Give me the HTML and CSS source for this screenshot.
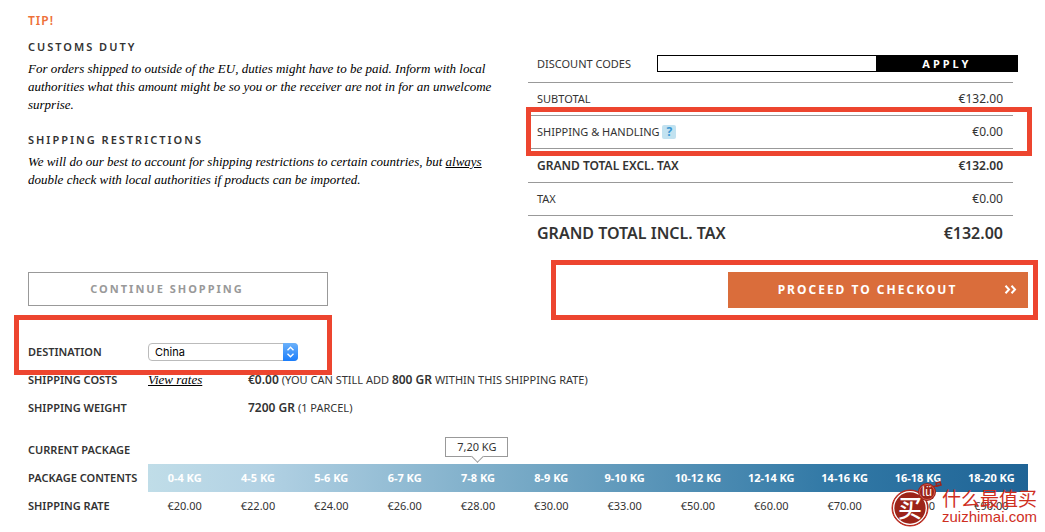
FILE: index.html
```html
<!DOCTYPE html>
<html lang="en">
<head>
  <meta charset="UTF-8">
  <title>Shopping Cart</title>
  <meta name="viewport" content="width=device-width, initial-scale=1.0">
  <link rel="stylesheet" href="styles.css">
</head>
<body>
  <main class="cart">
    <div class="cart-top">
      <section class="tips">
        <p class="tip-label">Tip!</p>
        <h2>Customs duty</h2>
        <p class="tip-text">For orders shipped to outside of the EU, duties might have to be paid. Inform with local<br>
          authorities what this amount might be so you or the receiver are not in for an unwelcome<br>
          surprise.</p>
        <h2>Shipping restrictions</h2>
        <p class="tip-text">We will do our best to account for shipping restrictions to certain countries, but <u>always</u><br>
          double check with local authorities if products can be imported.</p>
      </section>

      <section class="summary">
        <form class="discount">
          <label for="coupon">Discount codes</label>
          <input type="text" id="coupon" name="coupon">
          <button type="button">Apply</button>
        </form>
        <div class="totals-wrap">
          <table class="totals">
            <tr>
              <th scope="row">Subtotal</th>
              <td>€132.00</td>
            </tr>
            <tr>
              <th scope="row">Shipping &amp; handling <a href="#" class="help">?</a></th>
              <td>€0.00</td>
            </tr>
            <tr class="strong">
              <th scope="row">Grand total excl. tax</th>
              <td>€132.00</td>
            </tr>
            <tr>
              <th scope="row">Tax</th>
              <td>€0.00</td>
            </tr>
            <tr class="grand">
              <th scope="row">Grand total incl. tax</th>
              <td>€132.00</td>
            </tr>
          </table>
          <div class="mark mark-shipping"></div>
        </div>
      </section>
    </div>

    <div class="actions">
      <a href="#" class="btn btn-outline">Continue shopping</a>
      <div class="checkout">
        <button type="button" class="btn btn-primary">
          <span>Proceed to checkout</span>
          <svg width="13" height="9" viewBox="0 0 13 9" aria-hidden="true">
            <path d="M1.5 0.8 5 4.5 1.5 8.2M7.5 0.8 11 4.5 7.5 8.2" fill="none" stroke="#fff" stroke-width="2"/>
          </svg>
        </button>
        <div class="mark mark-checkout"></div>
      </div>
    </div>

    <section class="shipping">
      <div class="row">
        <label for="country">Destination</label>
        <div class="select">
          <select id="country" name="country">
            <option>China</option>
          </select>
          <svg width="15" height="18" viewBox="0 0 15 18" aria-hidden="true">
            <path d="M4.5 7.2 7.5 4.2 10.5 7.2M4.5 10.8 7.5 13.8 10.5 10.8" fill="none" stroke="#fff" stroke-width="1.4"/>
          </svg>
        </div>
        <div class="mark mark-destination"></div>
      </div>
      <div class="row">
        <span class="name">Shipping costs</span>
        <a href="#" class="rates">View rates</a>
        <span><b>€0.00</b> (you can still add <b>800 gr</b> within this shipping rate)</span>
      </div>
      <div class="row">
        <span class="name">Shipping weight</span>
        <span></span>
        <span><b>7200 gr</b> (1 parcel)</span>
      </div>
    </section>

    <table class="packages">
      <tr>
        <th scope="row">Current package</th>
        <td></td><td></td><td></td><td></td>
        <td><span class="bubble">7,20 kg</span></td>
        <td></td><td></td><td></td><td></td><td></td><td></td><td></td>
      </tr>
      <tr class="scale">
        <th scope="row">Package contents</th>
        <td>0-4 kg</td>
        <td>4-5 kg</td>
        <td>5-6 kg</td>
        <td>6-7 kg</td>
        <td>7-8 kg</td>
        <td>8-9 kg</td>
        <td>9-10 kg</td>
        <td>10-12 kg</td>
        <td>12-14 kg</td>
        <td>14-16 kg</td>
        <td>16-18 kg</td>
        <td>18-20 kg</td>
      </tr>
      <tr>
        <th scope="row">Shipping rate</th>
        <td>€20.00</td>
        <td>€22.00</td>
        <td>€24.00</td>
        <td>€26.00</td>
        <td>€28.00</td>
        <td>€30.00</td>
        <td>€33.00</td>
        <td>€50.00</td>
        <td>€60.00</td>
        <td>€70.00</td>
        <td>€80.00</td>
        <td>€90.00</td>
      </tr>
    </table>

    <div class="watermark" lang="zh">
      <svg width="52" height="48" viewBox="0 0 52 48">
        <path d="M43 8 C45 4 47 8 49 5 M46 3 50 2 51 5 47 6Z" fill="none" stroke="#9c2419" stroke-width="1.5"/>
        <circle cx="20" cy="28" r="18" fill="#9c2419" stroke="#c8271c" stroke-width="1"/>
        <circle cx="20" cy="28" r="16.3" fill="none" stroke="#fff" stroke-width="1.3"/>
        <circle cx="37" cy="12" r="9" fill="#9c2419"/>
        <circle cx="37" cy="12" r="7.5" fill="none" stroke="#d0564a" stroke-width="1"/>
        <text x="20" y="37" class="seal">买</text>
        <text x="37" y="16" class="seal-small">lü</text>
      </svg>
      <div class="watermark-text">
        <span class="watermark-name">什么最值买</span>
        <span class="watermark-url">zuizhimai.com</span>
      </div>
    </div>
  </main>
</body>
</html>
```
FILE: styles.css
```css
* {
  box-sizing: border-box;
}
body {
  margin: 0;
  background: #fff;
  color: #333;
  font-family: "Trebuchet MS", "Noto Sans", sans-serif;
  font-size: 11px;
  line-height: 18px;
}
.cart {
  position: relative;
  padding: 12px 17px 12px 28px;
}
.cart-top {
  display: grid;
  grid-template-columns: minmax(0, 48fr) minmax(0, 50fr);
  gap: 20px;
}

/* tips */
.tip-label {
  margin: 0 0 8px;
  color: #ee7038;
  font-size: 12px;
  font-weight: 600;
  letter-spacing: 1px;
  text-transform: uppercase;
}
.tips h2 {
  margin: 0 0 4px;
  font-size: 11px;
  font-weight: 600;
  line-height: 18px;
  letter-spacing: 2px;
  text-transform: uppercase;
}
.tip-text {
  margin: 0 0 17px;
  color: #000;
  font-family: Georgia, "Liberation Serif", serif;
  font-size: 13px;
  font-style: italic;
  line-height: 18px;
  white-space: nowrap;
}

/* summary */
.summary {
  padding-top: 43px;
}
.discount {
  display: flex;
  align-items: center;
  height: 17px;
  margin: 0 10px 10px 9px;
  text-transform: uppercase;
}
.discount label {
  width: 120px;
}
.discount input {
  flex: 3;
  min-width: 0;
  height: 17px;
  border: 1px solid #000;
  border-right: 0;
}
.discount button {
  flex: 2;
  height: 17px;
  padding: 0;
  border: 0;
  background: #000;
  color: #fff;
  font: bold 11px/17px "Noto Sans", sans-serif;
  letter-spacing: 3px;
  text-transform: uppercase;
}
.totals-wrap {
  position: relative;
  margin-right: 15px;
}
.totals {
  width: 100%;
  border-collapse: collapse;
  text-transform: uppercase;
}
.totals th,
.totals td {
  height: 33px;
  padding: 0 10px 0 9px;
  border-top: 1px solid #999;
  font-weight: normal;
  text-align: left;
}
.totals td {
  font-size: 12px;
  text-align: right;
}
.totals .strong th,
.totals .strong td {
  height: 34px;
  font-size: 12px;
  font-weight: 600;
}
.totals .grand th,
.totals .grand td {
  height: 35px;
  font-size: 16px;
  font-weight: 600;
}
.help {
  display: inline-block;
  width: 14px;
  height: 14px;
  border-radius: 2px;
  background: #c2e2f0;
  color: #3b97d3;
  font: bold 12px/14px "Noto Sans", sans-serif;
  text-align: center;
  text-decoration: none;
}

/* red frames */
.mark {
  position: absolute;
  border: 5px solid #ed452f;
  pointer-events: none;
}
.mark-shipping {
  top: 25px;
  left: -2px;
  right: -19px;
  height: 49px;
}
.mark-checkout {
  top: -12px;
  bottom: -12px;
  left: -177px;
  right: -10px;
}
.mark-destination {
  top: -23px;
  left: -14px;
  width: 318px;
  height: 60px;
}

/* buttons */
.actions {
  display: flex;
  align-items: flex-start;
  justify-content: space-between;
  margin-top: 21px;
}
.checkout {
  position: relative;
}
.btn {
  display: flex;
  align-items: center;
  justify-content: center;
  width: 300px;
  height: 34px;
  font: bold 11px/18px "Trebuchet MS", "Noto Sans", sans-serif;
  letter-spacing: 2px;
  text-decoration: none;
  text-transform: uppercase;
}
.btn-outline {
  padding-right: 22px;
  border: 1px solid #999;
  color: #999;
}
.btn-primary {
  height: 36px;
  padding: 0 11px 0 3px;
  border: 0;
  background: #da6d3b;
  color: #fff;
  font-size: 12px;
}
.btn-primary span {
  flex: 1;
}

/* shipping details */
.shipping {
  margin-top: 30px;
  text-transform: uppercase;
}
.row {
  position: relative;
  display: grid;
  grid-template-columns: 120px 100px 1fr;
  align-items: center;
  height: 28px;
}
.row label,
.row .name,
.packages th {
  font-size: 11px;
  font-weight: 600;
}
.row b {
  font-size: 12px;
  font-weight: 600;
}
.rates {
  color: #000;
  font-family: Georgia, "Liberation Serif", serif;
  font-size: 13px;
  font-style: italic;
  text-transform: none;
}
.select {
  position: relative;
  width: 150px;
  height: 18px;
}
.select select {
  display: block;
  width: 100%;
  height: 18px;
  padding: 0 20px 0 6px;
  border: 1px solid #bbb;
  border-radius: 4px;
  background: #fff;
  color: #000;
  font: 11px Inter, sans-serif;
  appearance: none;
}
.select svg {
  position: absolute;
  top: 0;
  right: 0;
  border-radius: 0 4px 4px 0;
  background: linear-gradient(#6bb1fa, #1a7dfb);
  pointer-events: none;
}

/* package table */
.packages {
  width: 100%;
  margin-top: 14px;
  border-collapse: collapse;
  table-layout: fixed;
  text-transform: uppercase;
}
.packages th,
.packages td {
  height: 28px;
  padding: 0;
  text-align: center;
  white-space: nowrap;
}
.packages th {
  width: 120px;
  background: #fff;
  text-align: left;
}
.scale {
  background: linear-gradient(to right, #c0dde8 12%, #b3d2e4 23%, #75a8c5 50%, #3279a6 80%, #1f6496);
}
.scale td {
  color: #fff;
  font-weight: bold;
}
.bubble {
  position: relative;
  display: block;
  width: 63px;
  height: 20px;
  margin: 0 auto 6px 4px;
  border: 1px solid #999;
}
.bubble::after {
  content: "";
  position: absolute;
  left: 27px;
  bottom: -5px;
  width: 8px;
  height: 8px;
  border: solid #999;
  border-width: 0 1px 1px 0;
  background: #fff;
  transform: rotate(45deg);
}

/* site stamp over the table */
.watermark {
  position: absolute;
  right: 8px;
  bottom: 4px;
  display: flex;
  align-items: flex-end;
  color: #cf2f1f;
}
.watermark-text {
  display: flex;
  flex-direction: column;
  padding-bottom: 2px;
}
.watermark-name {
  font: 19px/20px "Noto Sans CJK SC", sans-serif;
}
.watermark-url {
  font: 15px/18px "Liberation Sans", sans-serif;
}
.seal,
.seal-small {
  fill: #fff;
  font-family: "Noto Sans CJK SC", sans-serif;
  text-anchor: middle;
}
.seal {
  font-size: 24px;
  font-weight: 500;
}
.seal-small {
  font-size: 12px;
}
```
